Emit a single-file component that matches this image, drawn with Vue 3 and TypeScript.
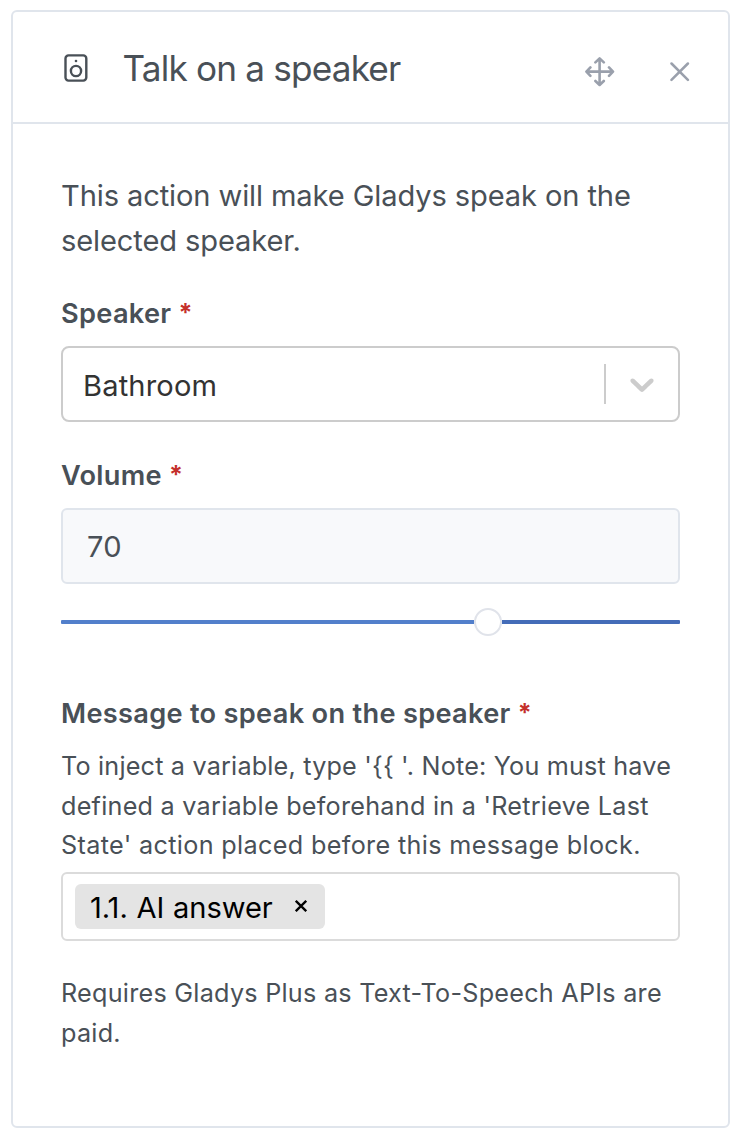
<script setup lang="ts">
import { ref } from 'vue'

const speaker = ref('Bathroom')
const volume = ref(70)
const tags = ref(['1.1. AI answer'])
const hint = [
  "To inject a variable, type '{{ '. Note: You must have",
  "defined a variable beforehand in a 'Retrieve Last",
  "State' action placed before this message block."
]
</script>

<template>
  <main class="page">
    <section class="card">
      <header class="card-header">
        <svg class="icon-speaker" viewBox="0 0 24 28" fill="none" stroke="currentColor" stroke-width="2.4">
          <rect x="1.5" y="1.4" width="20.8" height="25.2" rx="3" />
          <circle cx="12" cy="17" r="5.1" />
          <circle cx="12" cy="7" r="1.3" fill="currentColor" stroke="none" />
        </svg>
        <h3 class="title">Talk on a speaker</h3>
        <svg class="icon-move" viewBox="0 0 30 30" fill="none" stroke="currentColor" stroke-width="2.6" stroke-linecap="round" stroke-linejoin="round">
          <path d="M14.6 1.6V27.8M1.6 14.6H27.8M10.4 5.4 14.6 1.4 18.8 5.4M10.4 24 14.6 28 18.8 24M5.4 10.4 1.4 14.6 5.4 18.8M24 10.4 28 14.6 24 18.8" />
        </svg>
        <svg class="icon-close" viewBox="0 0 20 20" fill="none" stroke="currentColor" stroke-width="2.5" stroke-linecap="round">
          <path d="M1.5 1.5 17.9 17.9M17.9 1.5 1.5 17.9" />
        </svg>
      </header>
      <div class="card-body">
        <p class="intro">This action will make Gladys speak on the<br />selected speaker.</p>

        <label class="label">Speaker<span class="req">*</span></label>
        <div class="select">
          <span class="select-value">{{ speaker }}</span>
          <span class="separator"></span>
          <svg class="chevron" viewBox="0 0 20 20" fill="currentColor">
            <path d="M4.516 7.548c0.436-0.446 1.043-0.481 1.576 0l3.908 3.747 3.908-3.747c0.533-0.481 1.141-0.446 1.574 0 0.436 0.445 0.408 1.197 0 1.615-0.406 0.418-4.695 4.502-4.695 4.502-0.217 0.223-0.502 0.335-0.787 0.335s-0.570-0.112-0.789-0.335c0 0-4.287-4.084-4.695-4.502s-0.436-1.170 0-1.615z" />
          </svg>
        </div>

        <label class="label volume-label">Volume<span class="req">*</span></label>
        <div class="readonly">{{ volume }}</div>
        <div class="slider">
          <div class="fill" :style="{ flexGrow: volume - 0.12 }"></div>
          <div class="thumb"></div>
          <div class="rest" :style="{ flexGrow: 100 - volume + 0.12 }"></div>
        </div>

        <label class="label message-label">Message to speak on the speaker<span class="req">*</span></label>
        <p class="small">
          <span v-for="(line, i) in hint" :key="i" class="hint-line" :class="'hint-' + i">{{ line }}</span>
        </p>
        <div class="tag-input">
          <span v-for="tag in tags" :key="tag" class="tag">
            <span class="tag-text">{{ tag }}</span>
            <svg class="tag-x" viewBox="0 0 12 12" fill="none" stroke="currentColor" stroke-width="2.3">
              <path d="M0.8 0.8 11.2 11.2M11.2 0.8 0.8 11.2" />
            </svg>
          </span>
        </div>
        <p class="small note">Requires Gladys Plus as Text-To-Speech APIs are<br />paid.</p>
      </div>
    </section>
  </main>
</template>

<style>
body {
  background: #fff;
}
</style>

<style scoped>
.page {
  box-sizing: border-box;
  width: 746px;
  height: 1144px;
  padding: 10px 16px 16px 11px;
  background: #fff;
  font-family: Inter, "Liberation Sans", sans-serif;
  color: #495057;
}
.card {
  box-sizing: border-box;
  height: 1118px;
  border: 2px solid #e0e5ec;
  border-radius: 6px;
}
.card-header {
  display: flex;
  align-items: center;
  box-sizing: border-box;
  height: 112px;
  padding: 0 38px 0 51px;
  border-bottom: 2px solid #e0e5ec;
}
.icon-speaker {
  width: 24px;
  height: 28px;
  margin-top: 1px;
}
.title {
  flex: 1;
  margin: 2px 0 0 34.5px;
  font-size: 35.2px;
  line-height: 40px;
  font-weight: 400;
  letter-spacing: -0.83px;
  white-space: nowrap;
}
.icon-move {
  width: 30px;
  height: 30px;
  margin: 9px 55px 0 0;
  color: #9aa0ac;
}
.icon-close {
  width: 20px;
  height: 20px;
  margin-top: 9px;
  color: #9aa0ac;
}
.card-body {
  padding: 49px 48px 0;
  white-space: nowrap;
}
.intro {
  margin: 0;
  font-size: 29.1px;
  line-height: 45px;
  letter-spacing: -0.12px;
}
.label {
  display: flex;
  height: 42px;
  margin-top: 30px;
  margin-bottom: 11px;
  font-size: 27.2px;
  font-weight: 600;
  line-height: 42px;
  letter-spacing: 0.3px;
}
.volume-label {
  margin-top: 33px;
}
.message-label {
  margin-top: 57px;
  margin-bottom: 12px;
}
.req {
  margin-left: 7px;
  color: #c4302b;
  font-size: 25px;
  font-weight: 700;
  line-height: 40px;
}
.select {
  display: flex;
  align-items: center;
  box-sizing: border-box;
  height: 76px;
  padding: 0 16px 0 20px;
  border: 2px solid #ccc;
  border-radius: 8px;
  font-size: 29.1px;
  letter-spacing: 0.15px;
  color: #333;
}
.select-value {
  flex: 1;
  padding-top: 2px;
}
.separator {
  width: 2px;
  height: 40px;
  margin-right: 16px;
  background: #ccc;
}
.chevron {
  width: 40px;
  height: 40px;
  color: #ccc;
}
.readonly {
  box-sizing: border-box;
  height: 76px;
  padding: 0 24px;
  border: 2px solid #e0e5ec;
  border-radius: 6px;
  background: #f8f9fb;
  font-size: 29.1px;
  line-height: 73px;
  letter-spacing: 0.2px;
}
.slider {
  display: flex;
  align-items: center;
  height: 28px;
  margin-top: 24px;
}
.fill,
.rest {
  flex-basis: 0;
  height: 4px;
}
.fill {
  background: #527fcb;
  border-radius: 1px 0 0 1px;
}
.rest {
  background: #446cb8;
  border-radius: 0 1px 1px 0;
}
.thumb {
  box-sizing: border-box;
  width: 28px;
  height: 28px;
  border: 2px solid #e0e3ea;
  border-radius: 50%;
  background: #fff;
}
.small {
  margin: 0;
  font-size: 25.2px;
  line-height: 39.5px;
  letter-spacing: 0.25px;
}
.hint-line {
  display: block;
}
.hint-0 {
  letter-spacing: 0.19px;
}
.hint-2 {
  letter-spacing: 0.34px;
}
.tag-input {
  display: flex;
  align-items: center;
  box-sizing: border-box;
  height: 69px;
  margin-top: 6px;
  padding-left: 12px;
  border: 2px solid #dbdbdb;
  border-radius: 6px;
}
.tag {
  display: flex;
  align-items: center;
  justify-content: space-between;
  box-sizing: border-box;
  width: 250px;
  height: 45px;
  padding: 0 18px 0 15px;
  border-radius: 6px;
  background: #e4e4e4;
  color: #000;
  font-size: 29.1px;
}
.tag-text {
  padding-top: 2px;
  letter-spacing: 0.4px;
  word-spacing: 0.6px;
  letter-spacing: -0.05px;
}
.tag-x {
  width: 12px;
  height: 12px;
}
.note {
  margin-top: 32px;
  line-height: 40px;
}
</style>
